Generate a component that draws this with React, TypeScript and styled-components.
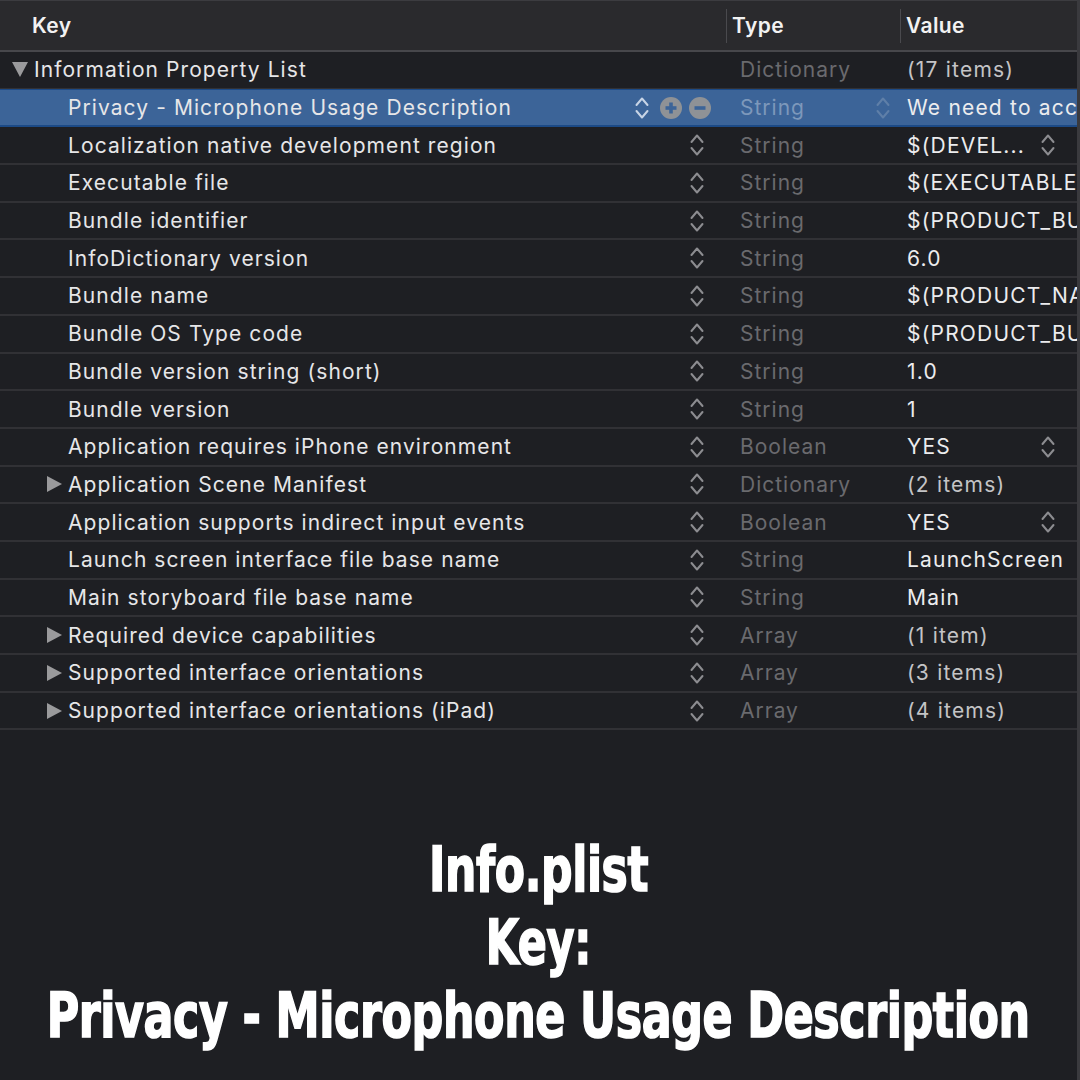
import React from "react";
import styled, { createGlobalStyle } from "styled-components";

const Global = createGlobalStyle`
  html, body { margin: 0; padding: 0; background: #1e1f23; }
  body { width: 1080px; height: 1080px; overflow: hidden; }
  * { box-sizing: border-box; }
`;

const Page = styled.div`
  width: 1080px;
  height: 1080px;
  background: #1e1f23;
  display: flex;
  flex-direction: column;
  font-family: Inter, "Noto Sans", "Liberation Sans", sans-serif;
  border-right: 3px solid #3a3a3e;
  overflow: hidden;
`;

const Header = styled.div`
  height: 52px;
  flex: none;
  display: grid;
  grid-template-columns: 726px 174px 1fr;
  background: #2a2a2d;
  border-top: 1px solid #3c3c40;
  border-bottom: 2px solid #47474b;
`;

const HeadCell = styled.div<{ $sep?: boolean; $pad: number }>`
  display: flex;
  align-items: center;
  padding-left: ${(p) => p.$pad}px;
  color: #f2f2f2;
  font-size: 21px;
  font-weight: 600;
  letter-spacing: 0.4px;
  position: relative;
  ${(p) =>
    p.$sep &&
    `&::before { content: ""; position: absolute; left: 0; top: 8px; bottom: 7px; width: 1px; background: #4a4a4e; }`}
`;

const Table = styled.div`
  display: flex;
  flex-direction: column;
  flex: none;
`;

const Row = styled.div<{ $sel?: boolean }>`
  height: 37.7px;
  display: grid;
  grid-template-columns: 726px 174px 1fr;
  align-items: center;
  border-bottom: 2px solid ${(p) => (p.$sel ? "#1c4a86" : "#313135")};
  background: ${(p) => (p.$sel ? "#3c6498" : "transparent")};
  ${(p) => p.$sel && "border-top: 1px solid #1c4a86; margin-top: -1px; height: 38.7px;"}
`;

const KeyCell = styled.div<{ $indent: number }>`
  display: flex;
  align-items: center;
  padding-left: ${(p) => p.$indent}px;
  height: 100%;
  position: relative;
`;

const Disclosure = styled.span<{ $open?: boolean }>`
  width: 0;
  height: 0;
  margin-right: 6px;
  ${(p) =>
    p.$open
      ? `border-left: 8px solid transparent; border-right: 8px solid transparent; border-top: 15px solid #9a9a9c; margin-left: 12px;`
      : `border-top: 8.5px solid transparent; border-bottom: 8.5px solid transparent; border-left: 15px solid #9a9a9c; margin-left: 47px;`}
`;

const KeyText = styled.span`
  color: #e6e6e8;
  font-size: 21px;
  letter-spacing: 1.08px;
  white-space: nowrap;
`;

const Controls = styled.div<{ $right: number }>`
  position: absolute;
  right: ${(p) => p.$right}px;
  top: 0;
  bottom: 0;
  display: flex;
  align-items: center;
  gap: 7px;
`;

const StepWrap = styled.span<{ $space?: number }>`
  display: flex;
  align-items: center;
  margin-right: ${(p) => p.$space ?? 0}px;
`;

const RoundBtn = styled.span`
  width: 22px;
  height: 22px;
  border-radius: 50%;
  background: #8f9296;
  display: flex;
  align-items: center;
  justify-content: center;
`;

const TypeCell = styled.div<{ $sel?: boolean }>`
  padding-left: 14px;
  font-size: 21px;
  letter-spacing: 1px;
  color: ${(p) => (p.$sel ? "#7d98bb" : "#6a6a6e")};
  position: relative;
  height: 100%;
  display: flex;
  align-items: center;
`;

const ValueCell = styled.div<{ $dim?: boolean }>`
  padding-left: 7px;
  font-size: 21px;
  letter-spacing: 1.2px;
  color: ${(p) => (p.$dim ? "#c4c4c6" : "#ececee")};
  white-space: nowrap;
  overflow: hidden;
  height: 100%;
  display: flex;
  align-items: center;
  position: relative;
`;

const ValueStepper = styled.span`
  position: absolute;
  left: 141px;
  top: 0;
  bottom: 0;
  display: flex;
  align-items: center;
`;

const TypeStepper = styled.span`
  position: absolute;
  right: 10px;
  top: 0;
  bottom: 0;
  display: flex;
  align-items: center;
`;

const Caption = styled.div`
  flex: 1;
  display: flex;
  flex-direction: column;
  align-items: center;
  justify-content: flex-end;
  padding-bottom: 28px;
  color: #ffffff;
  font-family: "DejaVu Sans Condensed", "DejaVu Sans", "Liberation Sans", sans-serif;
  font-weight: 700;
  font-size: 62px;
  line-height: 73px;
  letter-spacing: -0.5px;
  -webkit-text-stroke: 1.6px #ffffff;
  overflow: hidden;
`;

const CaptionLine = styled.div<{ $sx: number }>`
  transform: scaleX(${(p) => p.$sx});
  white-space: nowrap;
`;

const Chevrons = ({ color = "#8c8c90" }: { color?: string }) => (
  <svg width="14" height="26" viewBox="0 0 14 26">
    <polyline points="1.5,10 7,3.5 12.5,10" fill="none" stroke={color} strokeWidth="2" strokeLinecap="round" strokeLinejoin="round" />
    <polyline points="1.5,16 7,22.5 12.5,16" fill="none" stroke={color} strokeWidth="2" strokeLinecap="round" strokeLinejoin="round" />
  </svg>
);

const Plus = () => (
  <svg width="12" height="12" viewBox="0 0 12 12">
    <rect x="4.2" y="0.5" width="3.6" height="11" fill="#3c6498" />
    <rect x="0.5" y="4.2" width="11" height="3.6" fill="#3c6498" />
  </svg>
);
const Minus = () => (
  <svg width="12" height="12" viewBox="0 0 12 12">
    <rect x="0.5" y="4.2" width="11" height="3.6" fill="#3c6498" />
  </svg>
);

type Item = {
  key: string;
  type: string;
  value: string;
  dim?: boolean;
  expand?: boolean;
  vStep?: boolean;
};

const items: Item[] = [
  { key: "Localization native development region", type: "String", value: "$(DEVEL...", vStep: true },
  { key: "Executable file", type: "String", value: "$(EXECUTABLE_NAME)" },
  { key: "Bundle identifier", type: "String", value: "$(PRODUCT_BUNDLE_IDENTIFIER)" },
  { key: "InfoDictionary version", type: "String", value: "6.0" },
  { key: "Bundle name", type: "String", value: "$(PRODUCT_NAME)" },
  { key: "Bundle OS Type code", type: "String", value: "$(PRODUCT_BUNDLE_PACKAGE_TYPE)" },
  { key: "Bundle version string (short)", type: "String", value: "1.0" },
  { key: "Bundle version", type: "String", value: "1" },
  { key: "Application requires iPhone environment", type: "Boolean", value: "YES", vStep: true },
  { key: "Application Scene Manifest", type: "Dictionary", value: "(2 items)", dim: true, expand: true },
  { key: "Application supports indirect input events", type: "Boolean", value: "YES", vStep: true },
  { key: "Launch screen interface file base name", type: "String", value: "LaunchScreen" },
  { key: "Main storyboard file base name", type: "String", value: "Main" },
  { key: "Required device capabilities", type: "Array", value: "(1 item)", dim: true, expand: true },
  { key: "Supported interface orientations", type: "Array", value: "(3 items)", dim: true, expand: true },
  { key: "Supported interface orientations (iPad)", type: "Array", value: "(4 items)", dim: true, expand: true },
];

export default function App() {
  return (
    <Page>
      <Global />
      <Header>
        <HeadCell $pad={32}>Key</HeadCell>
        <HeadCell $pad={6} $sep>Type</HeadCell>
        <HeadCell $pad={6} $sep>Value</HeadCell>
      </Header>
      <Table>
        <Row>
          <KeyCell $indent={0}>
            <Disclosure $open />
            <KeyText>Information Property List</KeyText>
          </KeyCell>
          <TypeCell>Dictionary</TypeCell>
          <ValueCell $dim>(17 items)</ValueCell>
        </Row>
        <Row $sel>
          <KeyCell $indent={68}>
            <KeyText>Privacy - Microphone Usage Description</KeyText>
            <Controls $right={15}>
              <StepWrap $space={4}>
                <Chevrons color="#c7d4e6" />
              </StepWrap>
              <RoundBtn><Plus /></RoundBtn>
              <RoundBtn><Minus /></RoundBtn>
            </Controls>
          </KeyCell>
          <TypeCell $sel>
            String
            <TypeStepper><Chevrons color="#5f7fa8" /></TypeStepper>
          </TypeCell>
          <ValueCell>We need to access your microphone</ValueCell>
        </Row>
        {items.map((it) => (
          <Row key={it.key}>
            <KeyCell $indent={it.expand ? 0 : 68}>
              {it.expand && <Disclosure />}
              <KeyText>{it.key}</KeyText>
              <Controls $right={22}>
                <Chevrons />
              </Controls>
            </KeyCell>
            <TypeCell>{it.type}</TypeCell>
            <ValueCell $dim={it.dim}>
              {it.value}
              {it.vStep && (
                <ValueStepper>
                  <Chevrons />
                </ValueStepper>
              )}
            </ValueCell>
          </Row>
        ))}
      </Table>
      <Caption>
        <CaptionLine $sx={0.79}>Info.plist</CaptionLine>
        <CaptionLine $sx={0.77}>Key:</CaptionLine>
        <CaptionLine $sx={0.795}>Privacy - Microphone Usage Description</CaptionLine>
      </Caption>
    </Page>
  );
}
